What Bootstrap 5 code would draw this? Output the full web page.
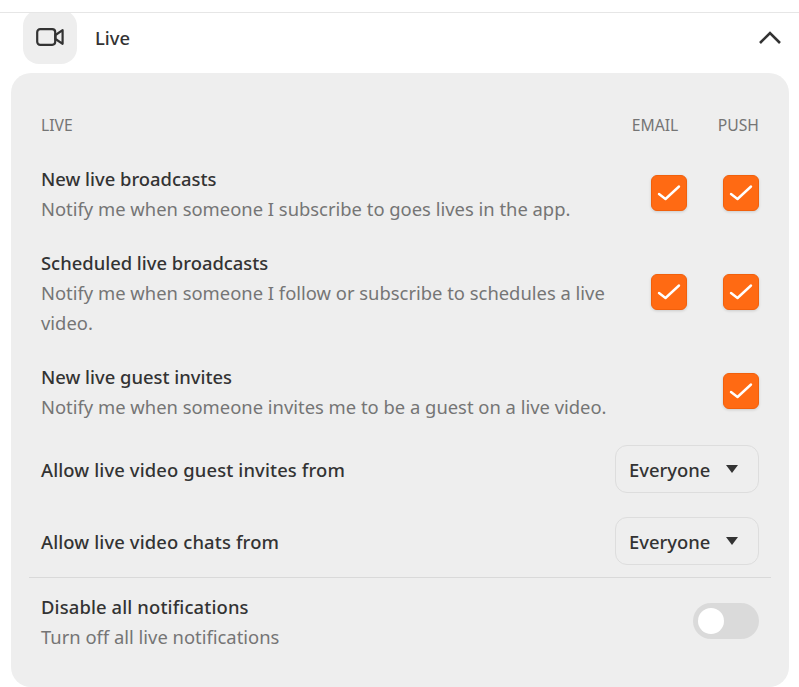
<!DOCTYPE html>
<html lang="en"><head><meta charset="utf-8"><title>Live</title>
<link rel="stylesheet" href="https://cdn.jsdelivr.net/npm/bootstrap@5.3.0/dist/css/bootstrap.min.css">
<style>
html,body{height:687px;overflow:hidden}
body{font-family:"Noto Sans","Open Sans",sans-serif;background:#fff;color:#333;padding-top:12px;font-size:18px}
.sec-head{height:61px;border-top:1px solid #e6e6e6;overflow:hidden;padding:0 17px 0 23px}
.sec-ico{width:54px;height:54px;margin-top:-13px;border-radius:16px;background:#eee}
.sec-title{font-size:18.4px;font-weight:500;margin-left:18px;margin-top:-10px}
.chev{margin-top:-12px}
.panel-box{margin:0 10px 0 11px;height:614px;background:#eee;border-radius:20px;padding:42px 18px 0}
.rowx{padding:0 12px}
.cap{font-size:15.7px;color:#757575;line-height:20px}
.cap-e{width:64px;text-align:center}
.cap-p{width:72px;text-align:right}
.item{margin-top:28px}
.item~.item{margin-top:24px}
.ttl{font-size:18.4px;font-weight:500;line-height:30px;color:#333;padding-top:1px;margin-bottom:-1px}
.ttl-w{letter-spacing:.13px}
.sub{font-size:18.4px;line-height:30px;color:#757575;padding-top:1px;margin-bottom:-1px}
.txt{flex:1 1 auto;min-width:0}
.chk{width:36px;height:36px;border-radius:6px;background:#ff6a13;border:1px solid #f1600c;box-shadow:0 1px 3px rgba(0,0,0,.15);flex:none}
.chk-cell{width:72px;flex:none;display:flex;justify-content:flex-end}
.sel{width:144px;height:48px;border:1px solid #ddd;border-radius:12px;padding:1px 13px 0;font-size:18.4px;font-weight:500;color:#333}
.arrow{width:0;height:0;border-left:6px solid transparent;border-right:6px solid transparent;border-top:8px solid #333;margin:-2px 7px 0 0}
.divx{border-top:1px solid #d9d9d9;margin-top:12px}
.item.last{margin-top:13px}
.tog{width:66px;height:36px;border-radius:18px;background:#dadada;padding:5px;flex:none}
.knob{width:26px;height:26px;border-radius:50%;background:#fff}
</style></head>
<body>
<div class="sec-head d-flex align-items-center">
 <div class="sec-ico d-flex align-items-center justify-content-center">
  <svg width="28" height="18" viewBox="0 0 28 18" fill="none" stroke="#333" stroke-width="2.2" stroke-linejoin="round"><rect x="1.2" y="1.2" width="18" height="15.6" rx="3"/><path d="M19.5 7 26.6 2.2V15.8L19.5 11Z"/></svg>
 </div>
 <div class="sec-title">Live</div>
 <svg class="ms-auto chev" width="24" height="14" viewBox="0 0 24 14" fill="none" stroke="#333" stroke-width="2.6"><path d="M2 13 12 3l10 10"/></svg>
</div>
<div class="panel-box">
 <div class="rowx d-flex align-items-center">
  <div class="cap txt">LIVE</div><div class="cap cap-e">EMAIL</div><div class="cap cap-p">PUSH</div>
 </div>
 <div class="rowx item d-flex align-items-center">
  <div class="txt"><div class="ttl">New live broadcasts</div><div class="sub">Notify me when someone I subscribe to goes lives in the app.</div></div>
  <div class="chk-cell"><span class="chk d-flex align-items-center justify-content-center"><svg width="24" height="18" viewBox="0 0 24 18" fill="none" stroke="#fff" stroke-width="2.4" stroke-linecap="round" stroke-linejoin="round"><path d="M2 10l6.500 5L22 2.500"/></svg></span></div>
  <div class="chk-cell"><span class="chk d-flex align-items-center justify-content-center"><svg width="24" height="18" viewBox="0 0 24 18" fill="none" stroke="#fff" stroke-width="2.4" stroke-linecap="round" stroke-linejoin="round"><path d="M2 10l6.500 5L22 2.500"/></svg></span></div>
 </div>
 <div class="rowx item d-flex align-items-center">
  <div class="txt"><div class="ttl">Scheduled live broadcasts</div><div class="sub">Notify me when someone I follow or subscribe to schedules a live video.</div></div>
  <div class="chk-cell"><span class="chk d-flex align-items-center justify-content-center"><svg width="24" height="18" viewBox="0 0 24 18" fill="none" stroke="#fff" stroke-width="2.4" stroke-linecap="round" stroke-linejoin="round"><path d="M2 10l6.500 5L22 2.500"/></svg></span></div>
  <div class="chk-cell"><span class="chk d-flex align-items-center justify-content-center"><svg width="24" height="18" viewBox="0 0 24 18" fill="none" stroke="#fff" stroke-width="2.4" stroke-linecap="round" stroke-linejoin="round"><path d="M2 10l6.500 5L22 2.500"/></svg></span></div>
 </div>
 <div class="rowx item d-flex align-items-center">
  <div class="txt"><div class="ttl">New live guest invites</div><div class="sub">Notify me when someone invites me to be a guest on a live video.</div></div>
  <div class="chk-cell"><span class="chk d-flex align-items-center justify-content-center"><svg width="24" height="18" viewBox="0 0 24 18" fill="none" stroke="#fff" stroke-width="2.4" stroke-linecap="round" stroke-linejoin="round"><path d="M2 10l6.500 5L22 2.500"/></svg></span></div>
 </div>
 <div class="rowx item d-flex align-items-center">
  <div class="ttl ttl-w txt">Allow live video guest invites from</div>
  <div class="sel d-flex align-items-center justify-content-between"><span>Everyone</span><span class="arrow"></span></div>
 </div>
 <div class="rowx item d-flex align-items-center">
  <div class="ttl ttl-w txt">Allow live video chats from</div>
  <div class="sel d-flex align-items-center justify-content-between"><span>Everyone</span><span class="arrow"></span></div>
 </div>
 <div class="divx"></div>
 <div class="rowx item last d-flex align-items-center">
  <div class="txt"><div class="ttl ttl-w">Disable all notifications</div><div class="sub">Turn off all live notifications</div></div>
  <div class="tog"><div class="knob"></div></div>
 </div>
</div>
<script src="https://cdn.jsdelivr.net/npm/bootstrap@5.3.0/dist/js/bootstrap.bundle.min.js"></script>
</body></html>
